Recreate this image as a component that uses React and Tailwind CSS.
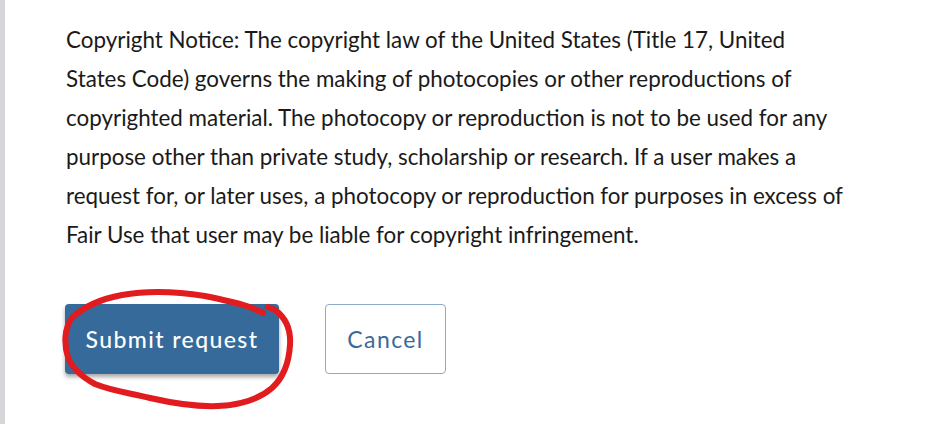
export default function App() {
  return (
    <div className="relative w-[949px] h-[424px] overflow-hidden bg-white border-l-[5px] border-[#d4d6d9] font-['Lato','Liberation_Sans',sans-serif]">
      {/* Notice */}
      <div className="pl-[61px] pt-[20px]">
        <p className="w-[870px] text-[22.4px] leading-[39px] text-[#1a1a1a]">
          Copyright Notice: The copyright law of the United States (Title 17, United<br />
          States Code) governs the making of photocopies or other reproductions of<br />
          copyrighted material. The photocopy or reproduction is not to be used for any<br />
          purpose other than private study, scholarship or research. If a user makes a<br />
          request for, or later uses, a photocopy or reproduction for purposes in excess of<br />
          Fair Use that user may be liable for copyright infringement.
        </p>

        <div className="flex items-center gap-[46px] mt-[50px] ml-[-1px]">
          <button className="h-[70px] w-[214px] rounded-[4px] bg-[#356a9b] text-white text-[23px] font-medium tracking-[1.4px] shadow-[0_3px_4px_rgba(0,0,0,0.35)]">
            Submit request
          </button>
          <button className="h-[70px] w-[121px] rounded-[4px] border border-[#8eabcb] bg-white text-[#3a6a99] text-[23px] tracking-[1.4px]">
            Cancel
          </button>
        </div>
      </div>

      {/* hand-drawn red circle */}
      <svg className="absolute left-[-5px] top-0 pointer-events-none" width="949" height="424" viewBox="0 0 949 424">
        <path
          d="M263 313 C248 305 238 303 205 296 C180 292 150 290 122 295 C100 299 82 308 72 318 C64 328 64 345 68 357 C72 368 80 376 95 384 C112 391 130 393 150 398 C172 403 195 407 218 406 C240 405 258 400 272 388 C284 377 289 362 290 345 C291 330 286 318 275 310 L268 307"
          fill="none"
          stroke="#e11b1e"
          strokeWidth="6"
          strokeLinecap="round"
          strokeLinejoin="round"
        />
      </svg>
    </div>
  );
}
